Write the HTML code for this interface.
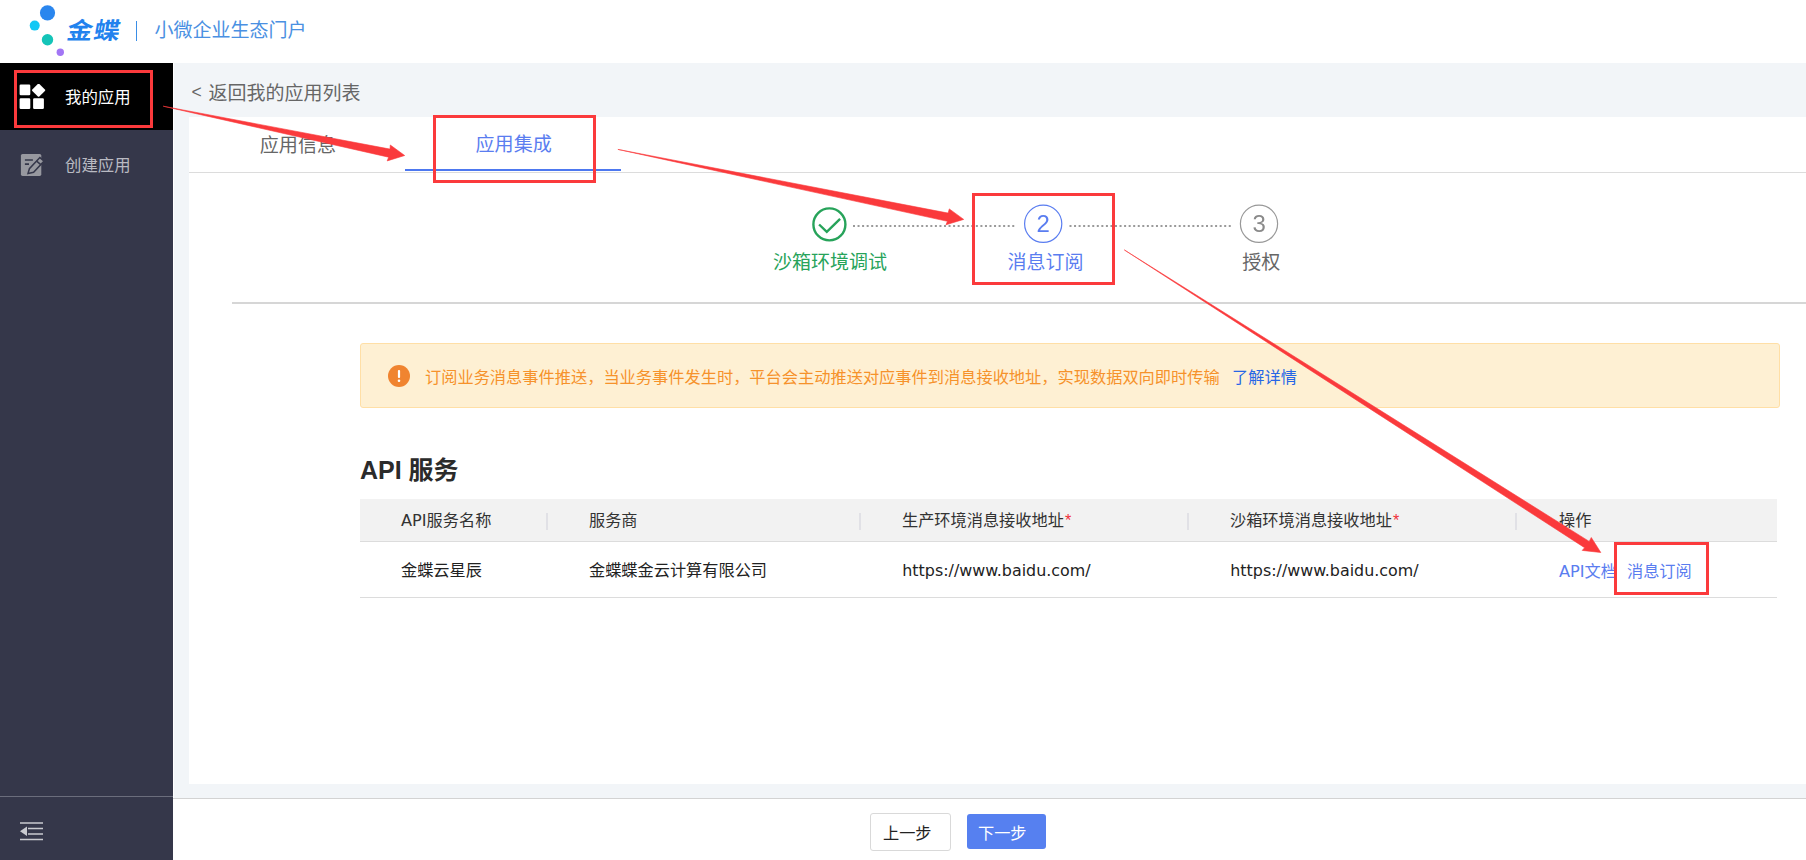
<!DOCTYPE html>
<html lang="zh-CN">
<head>
<meta charset="utf-8">
<title>小微企业生态门户</title>
<style>
*{box-sizing:border-box;margin:0;padding:0}
html,body{width:1806px;height:860px;overflow:hidden;background:#f2f5f8}
body{position:relative;font-family:"Liberation Sans","Noto Sans CJK SC",sans-serif;color:#333;font-size:16px}
.abs{position:absolute}
.t{position:absolute;white-space:nowrap;line-height:1}
.lat{font-family:"DejaVu Sans","Liberation Sans","Noto Sans CJK SC",sans-serif}
#header{position:absolute;left:0;top:0;width:1806px;height:63px;background:#fff}
#sidebar{position:absolute;left:0;top:63px;width:173px;height:797px;background:#35374a}
#side-active{position:absolute;left:0;top:0;width:173px;height:67px;background:#000}
#side-foot{position:absolute;left:0;top:733px;width:173px;height:1px;background:#6b6d7c}
#card{position:absolute;left:189px;top:117px;width:1617px;height:667px;background:#fff}
#footer{position:absolute;left:173px;top:798px;width:1633px;height:62px;background:#fff;border-top:1px solid #d3d3d3}
.redbox{position:absolute;border:3px solid #fb3a3c}
#overlay{position:absolute;left:0;top:0;width:1806px;height:860px;pointer-events:none}
</style>
</head>
<body>

<!-- HEADER -->
<div id="header">
  <svg class="abs" style="left:0;top:0" width="80" height="63" viewBox="0 0 80 63">
    <circle cx="47.5" cy="12.8" r="7.6" fill="#2a86ee"/>
    <circle cx="34.7" cy="25.6" r="5" fill="#12c8f5"/>
    <circle cx="47.5" cy="39.8" r="5.7" fill="#14c4b8"/>
    <circle cx="60.3" cy="52.3" r="3.7" fill="#a276f5"/>
  </svg>
  <div class="t" id="brand" style="left:65.2px;top:19.8px;font-size:23.5px;font-weight:700;color:#2182ee;letter-spacing:1px;transform-origin:0 100%;transform:scaleX(1.1) skewX(-9deg)">金蝶</div>
  <div class="abs" style="left:135.7px;top:20.6px;width:1.7px;height:20px;background:#3a8ee6"></div>
  <div class="t" id="portal" style="left:154.5px;top:21px;font-size:19px;color:#4a90e2">小微企业生态门户</div>
</div>

<!-- SIDEBAR -->
<div id="sidebar">
  <div id="side-active"></div>
  <svg class="abs" style="left:19px;top:21px" width="28" height="26" viewBox="0 0 28 26">
    <rect x="0.6" y="0.5" width="10.7" height="10.8" rx="1.2" fill="#fff"/>
    <rect x="0.6" y="14.3" width="10.7" height="10.6" rx="1.2" fill="#fff"/>
    <rect x="14.1" y="14.3" width="10.8" height="10.6" rx="1.2" fill="#fff"/>
    <rect x="14.65" y="1.25" width="9.9" height="9.9" rx="1" fill="#fff" transform="rotate(45 19.6 6.2)"/>
  </svg>
  <div class="t" style="left:65px;top:25.8px;font-size:16.4px;color:#fff;font-weight:400">我的应用</div>
  <svg class="abs" style="left:20px;top:90px" width="28" height="26" viewBox="0 0 28 26">
    <rect x="0.9" y="0.9" width="20.4" height="22" rx="1.6" fill="#97989f"/>
    <path d="M4.9 7h8M4.9 11.1h4.1" stroke="#35374a" stroke-width="1.6" fill="none"/>
    <path d="M8 20.4L9.4 15.7L19.9 4.6L24.1 8.05L13.6 19.2Z" fill="#97989f" stroke="#35374a" stroke-width="1.5" stroke-linejoin="miter"/>
    <path d="M16.6 8.1l4.2 3.45" stroke="#35374a" stroke-width="1.5" fill="none"/>
  </svg>
  <div class="t" style="left:65px;top:94.3px;font-size:16.4px;color:#b9bac2">创建应用</div>
  <div id="side-foot"></div>
  <svg class="abs" style="left:20px;top:759px" width="24" height="20" viewBox="0 0 24 20">
    <path d="M0 1h23M8 6.5h15M8 12h15M0 17.5h23" stroke="#c9cad0" stroke-width="1.6" fill="none"/>
    <path d="M0 9.2l7-4.8v9.6z" fill="#c9cad0"/>
  </svg>
</div>

<div class="abs" style="left:173px;top:63px;width:1px;height:735px;background:#fff"></div>
<!-- BREADCRUMB -->
<div class="t" style="left:191.6px;top:84.4px;font-size:17.5px;color:#666">&lt;</div><div class="t" id="back" style="left:208.6px;top:84px;font-size:19px;color:#666">返回我的应用列表</div>

<!-- CARD -->
<div id="card">
  <!-- tabs -->
  <div class="t" style="left:70.7px;top:19.3px;font-size:19.1px;color:#666">应用信息</div>
  <div class="t" style="left:286.5px;top:17.6px;font-size:19.1px;color:#5a7df0">应用集成</div>
  <div class="abs" style="left:0;top:55px;width:1617px;height:1px;background:#dcdcdc"></div>
  <div class="abs" style="left:216px;top:52px;width:216px;height:2px;background:#4d78f0"></div>

  <!-- steps -->
  <svg class="abs" style="left:600px;top:80px" width="520" height="60" viewBox="0 0 520 60">
    <circle cx="40.4" cy="27.4" r="16" fill="#fff" stroke="#27a35a" stroke-width="2.4"/>
    <path d="M30.1 27.5l7.7 7.4 13.3-13" fill="none" stroke="#27a35a" stroke-width="2.4"/>
    <line x1="64" y1="28.9" x2="227" y2="28.9" stroke="#9a9a9a" stroke-width="2" stroke-dasharray="2 2.55"/>
    <circle cx="254.2" cy="26.8" r="18.6" fill="#fff" stroke="#5a7df0" stroke-width="1.2"/>
    <line x1="280.5" y1="28.9" x2="443" y2="28.9" stroke="#9a9a9a" stroke-width="2" stroke-dasharray="2 2.55"/>
    <circle cx="470" cy="26.8" r="18.6" fill="#fff" stroke="#999" stroke-width="1.2"/>
  </svg>
  <div class="t" id="d2" style="left:1036.5px;top:212.3px;font-size:24px;color:#5a7df0;position:fixed">2</div>
  <div class="t" id="d3" style="left:1252.4px;top:212.3px;font-size:24px;color:#8a8a8a;position:fixed">3</div>
  <div class="t" id="l1" style="left:584px;top:136.3px;font-size:19px;color:#27a35a">沙箱环境调试</div>
  <div class="t" id="l2" style="left:818.4px;top:135.8px;font-size:19px;color:#5a7df0">消息订阅</div>
  <div class="t" id="l3" style="left:1053.2px;top:135.8px;font-size:19px;color:#666">授权</div>
  <div class="abs" style="left:43px;top:185px;width:1574px;height:2px;background:#d6d6d6"></div>

  <!-- alert -->
  <div class="abs" style="left:171px;top:226px;width:1420px;height:65px;background:#fef0d3;border:1px solid #ffdfa6;border-radius:3px"></div>
  <svg class="abs" style="left:199px;top:248px" width="22" height="22" viewBox="0 0 22 22">
    <circle cx="11" cy="11" r="11" fill="#f08430"/>
    <rect x="9.9" y="5" width="2.2" height="8" rx="1" fill="#fff"/>
    <circle cx="11" cy="15.8" r="1.3" fill="#fff"/>
  </svg>
  <div class="t" style="left:236px;top:251.6px;font-size:16.23px;color:#f6922b">订阅业务消息事件推送，当业务事件发生时，平台会主动推送对应事件到消息接收地址，实现数据双向即时传输</div>
  <div class="t" style="left:1043px;top:251.6px;font-size:16.23px;color:#2666e6">了解详情</div>

  <!-- heading -->
  <div class="t" style="left:171px;top:340.5px;font-size:25px;font-weight:700;color:#2b2b2b">API 服务</div>

  <!-- table -->
  <div class="abs" style="left:171px;top:382px;width:1417px;height:42px;background:#f2f2f2"></div>
  <div class="abs" style="left:171px;top:424px;width:1417px;height:1px;background:#dcdcdc"></div>
  <div class="abs" style="left:171px;top:480px;width:1417px;height:1px;background:#dcdcdc"></div>
  <div class="abs" style="left:357px;top:396px;width:2px;height:17px;background:#e1e1e6"></div>
  <div class="abs" style="left:670px;top:396px;width:2px;height:17px;background:#e1e1e6"></div>
  <div class="abs" style="left:998px;top:396px;width:2px;height:17px;background:#e1e1e6"></div>
  <div class="abs" style="left:1326px;top:396px;width:2px;height:17px;background:#e1e1e6"></div>

  <div class="t" style="left:212px;top:395px;font-size:16.2px;color:#333"><span class="lat">API</span>服务名称</div>
  <div class="t" style="left:400px;top:395px;font-size:16.2px;color:#333">服务商</div>
  <div class="t" style="left:713px;top:395px;font-size:16.2px;color:#333">生产环境消息接收地址<span style="color:#f0303a;margin-left:1px">*</span></div>
  <div class="t" style="left:1041px;top:395px;font-size:16.2px;color:#333">沙箱环境消息接收地址<span style="color:#f0303a;margin-left:1px">*</span></div>
  <div class="t" style="left:1370px;top:395px;font-size:16.2px;color:#333">操作</div>

  <div class="t" style="left:212px;top:445px;font-size:16.2px;color:#222">金蝶云星辰</div>
  <div class="t" style="left:400px;top:445px;font-size:16.2px;color:#222">金蝶蝶金云计算有限公司</div>
  <div class="t lat" style="left:713.3px;top:446px;font-size:15.9px;color:#222">https://www.baidu.com/</div>
  <div class="t lat" style="left:1041.3px;top:446px;font-size:15.9px;color:#222">https://www.baidu.com/</div>
  <div class="t" style="left:1370px;top:445.7px;font-size:16.2px;color:#5a7df0"><span class="lat">API</span>文档</div>
  <div class="t" style="left:1438px;top:445.7px;font-size:16.2px;color:#5a7df0">消息订阅</div>
</div>

<!-- FOOTER -->
<div id="footer">
  <div class="abs" style="left:697px;top:14px;width:81px;height:38px;border:1px solid #d9d9d9;border-radius:3px;background:#fff"></div>
  <div class="t" style="left:710px;top:25.7px;font-size:16.2px;color:#222">上一步</div>
  <div class="abs" style="left:794px;top:15px;width:79px;height:35px;border-radius:3px;background:#5680f0"></div>
  <div class="t" style="left:805px;top:25.7px;font-size:16.2px;color:#fff">下一步</div>
</div>

<!-- ANNOTATIONS -->
<div class="redbox" style="left:14px;top:70px;width:139px;height:58px"></div>
<div class="redbox" style="left:433px;top:115px;width:163px;height:68px"></div>
<div class="redbox" style="left:972px;top:193px;width:143px;height:92px"></div>
<div class="redbox" style="left:1614px;top:542px;width:95px;height:53px"></div>
<svg id="overlay" viewBox="0 0 1806 860">
  <g fill="#fa3a3c" stroke="#fa3a3c" stroke-width="0.6" stroke-linejoin="miter">
    <polygon points="163.2,106.2 390,149.1 390.3,145 404.7,155.5 387.2,160.9 388.6,157.2"/>
    <polygon points="617.9,149.4 948.1,213.1 949.3,208.9 963.7,219.4 946,224.8 947.4,221.3"/>
    <polygon points="1124.3,249.9 1589.2,541.4 1591.3,537.5 1600.8,552.5 1582.2,550.4 1584.6,547.7"/>
  </g>
</svg>

</body>
</html>
